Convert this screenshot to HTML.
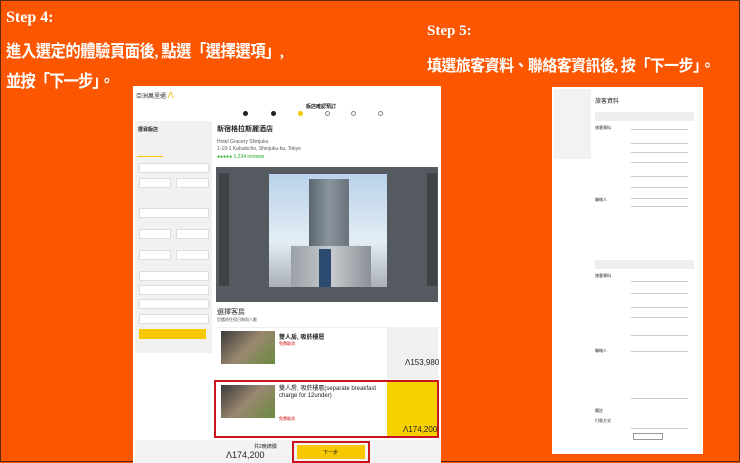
<!DOCTYPE html>
<html><head><meta charset="utf-8"><style>
*{margin:0;padding:0;box-sizing:border-box}
body{width:740px;height:462px;background:#fd5600;position:relative;overflow:hidden;border:1px solid #5a2a10;font-family:"Liberation Sans","Noto Sans CJK TC",sans-serif}
.t{position:absolute;color:#fff;font-family:"Liberation Serif","Noto Sans CJK TC",sans-serif;font-weight:bold;white-space:nowrap;transform-origin:0 0}
.a{position:absolute}
.g{background:#eee}
.ln{position:absolute;height:2px;background:#ccc}
.tx{position:absolute;font-size:5px;color:#555;white-space:nowrap}
</style></head><body>
<div class="t" style="left:5px;top:8px;font-size:16px;font-family:'Liberation Serif',serif">Step 4:</div>
<div class="t" style="left:5px;top:36px;font-size:17px;transform:scaleX(0.9);letter-spacing:-0.5px">進入選定的體驗頁面後, 點選「選擇選項」,</div>
<div class="t" style="left:5px;top:66px;font-size:17px;transform:scaleX(0.9);letter-spacing:-1px">並按「下一步」。</div>
<div class="t" style="left:426px;top:22px;font-size:15px;font-family:'Liberation Serif',serif">Step 5:</div>
<div class="t" style="left:426px;top:51px;font-size:16px;transform:scaleX(0.93);letter-spacing:-0.5px">填選旅客資料、聯絡客資訊後, 按「下一步」。</div>

<!-- step4 screenshot -->
<div class="a" style="left:132px;top:85px;width:308px;height:377px;background:#fff"></div>
<div class="tx" style="left:135px;top:89px;font-size:6px;color:#333">亞洲萬里通 <span style="color:#e8b800;font-size:9px">Λ</span></div>
<div class="tx" style="left:305px;top:102px;font-size:5px;color:#222;font-weight:bold">飯店確認預訂</div>
<div class="a" style="left:242px;top:110px;width:5px;height:5px;border-radius:50%;background:#222"></div>
<div class="a" style="left:270px;top:110px;width:5px;height:5px;border-radius:50%;background:#222"></div>
<div class="a" style="left:297px;top:110px;width:5px;height:5px;border-radius:50%;background:#f7c800"></div>
<div class="a" style="left:324px;top:110px;width:5px;height:5px;border-radius:50%;border:1px solid #888"></div>
<div class="a" style="left:350px;top:110px;width:5px;height:5px;border-radius:50%;border:1px solid #888"></div>
<div class="a" style="left:377px;top:110px;width:5px;height:5px;border-radius:50%;border:1px solid #888"></div>
<div class="a g" style="left:134px;top:120px;width:77px;height:232px;background:#f1f1f1"></div>
<div class="tx" style="left:137px;top:125px;color:#222;font-weight:bold">搜尋飯店</div>
<div class="a" style="left:136px;top:155px;width:26px;height:1px;background:#f7c800"></div>
<div class="a" style="left:138px;top:162px;width:70px;height:10px;background:#fff;border:1px solid #ddd"></div>
<div class="a" style="left:138px;top:177px;width:32px;height:10px;background:#fff;border:1px solid #ddd"></div>
<div class="a" style="left:175px;top:177px;width:33px;height:10px;background:#fff;border:1px solid #ddd"></div>
<div class="a" style="left:138px;top:207px;width:70px;height:10px;background:#fff;border:1px solid #ddd"></div>
<div class="a" style="left:138px;top:228px;width:32px;height:10px;background:#fff;border:1px solid #ddd"></div>
<div class="a" style="left:175px;top:228px;width:33px;height:10px;background:#fff;border:1px solid #ddd"></div>
<div class="a" style="left:138px;top:249px;width:32px;height:10px;background:#fff;border:1px solid #ddd"></div>
<div class="a" style="left:175px;top:249px;width:33px;height:10px;background:#fff;border:1px solid #ddd"></div>
<div class="a" style="left:138px;top:270px;width:70px;height:10px;background:#fff;border:1px solid #ddd"></div>
<div class="a" style="left:138px;top:284px;width:70px;height:10px;background:#fff;border:1px solid #ddd"></div>
<div class="a" style="left:138px;top:298px;width:70px;height:10px;background:#fff;border:1px solid #ddd"></div>
<div class="a" style="left:138px;top:313px;width:70px;height:10px;background:#fff;border:1px solid #ddd"></div>
<div class="a" style="left:138px;top:328px;width:67px;height:10px;background:#f7c800"></div>
<div class="tx" style="left:216px;top:123px;font-size:7px;color:#222;font-weight:bold">新宿格拉斯麗酒店</div>
<div class="tx" style="left:216px;top:138px">Hotel Gracery Shinjuku</div>
<div class="tx" style="left:216px;top:145px">1-19-1 Kabukicho, Shinjuku-ku, Tokyo</div>
<div class="tx" style="left:216px;top:153px;color:#2a2">●●●●● 1,234 reviews</div>
<div class="a" style="left:215px;top:166px;width:222px;height:135px;background:#555a60"></div>
<div class="a" style="left:218px;top:172px;width:10px;height:113px;background:#3f4348"></div>
<div class="a" style="left:426px;top:172px;width:10px;height:113px;background:#3f4348"></div>
<div class="a" style="left:268px;top:173px;width:118px;height:113px;background:linear-gradient(180deg,#b9d2ea,#e4edf5 60%,#aab0b6)"></div>
<div class="a" style="left:308px;top:178px;width:40px;height:80px;background:linear-gradient(90deg,#5c6670,#8a949c,#6a737c)"></div>
<div class="a" style="left:290px;top:245px;width:80px;height:41px;background:linear-gradient(90deg,#9aa0a6,#c8ccd0,#8a9096)"></div>
<div class="a" style="left:318px;top:248px;width:12px;height:38px;background:#2c4a70"></div>
<div class="tx" style="left:216px;top:306px;font-size:7px;color:#222">選擇客房</div>
<div class="tx" style="left:216px;top:316px;font-size:4px">您選的住宿日期與人數</div>
<div class="a" style="left:216px;top:326px;width:221px;height:52px;border-top:1px solid #eee"></div>
<div class="a" style="left:220px;top:330px;width:54px;height:33px;background:linear-gradient(135deg,#3a3a3a,#9a8870 50%,#6a8a40)"></div>
<div class="tx" style="left:278px;top:331px;font-size:6px;color:#222;font-weight:bold">雙人房, 吸菸樓層</div>
<div class="tx" style="left:278px;top:340px;font-size:4px;color:#c00">免費取消</div>
<div class="a" style="left:386px;top:326px;width:51px;height:52px;background:#f0f0f0"></div>
<div class="tx" style="left:404px;top:357px;font-size:8px;color:#222">Λ153,980</div>
<div class="a" style="left:213px;top:379px;width:225px;height:58px;border:2px solid #c8141a"></div>
<div class="a" style="left:220px;top:384px;width:54px;height:33px;background:linear-gradient(135deg,#3a3a3a,#9a8870 50%,#6a8a40)"></div>
<div class="tx" style="left:278px;top:385px;font-size:6px;color:#222;line-height:7px">雙人房, 吸菸樓層(separate breakfast<br>charge for 12under)</div>
<div class="tx" style="left:278px;top:415px;font-size:4px;color:#c00">免費取消</div>
<div class="a" style="left:386px;top:381px;width:50px;height:54px;background:#f7d000"></div>
<div class="tx" style="left:402px;top:424px;font-size:8px;color:#222">Λ174,200</div>
<div class="a" style="left:134px;top:439px;width:306px;height:23px;background:#f3f3f3"></div>
<div class="tx" style="left:253px;top:442px;font-size:5px;color:#222">共2晚總價</div>
<div class="tx" style="left:225px;top:449px;font-size:9px;color:#222">Λ174,200</div>
<div class="a" style="left:291px;top:440px;width:78px;height:22px;border:2px solid #c8141a"></div>
<div class="a" style="left:296px;top:444px;width:68px;height:14px;background:#f7c800"></div>
<div class="tx" style="left:322px;top:448px;color:#222">下一步</div>

<!-- step5 screenshot -->
<div class="a" style="left:551px;top:86px;width:151px;height:367px;background:#fff"></div>
<div class="a" style="left:553px;top:88px;width:37px;height:70px;background:#f2f2f2"></div>
<div class="tx" style="left:594px;top:95px;font-size:6px;color:#222">旅客資料</div>
<div class="a" style="left:594px;top:111px;width:99px;height:9px;background:#eee"></div>
<div class="a" style="left:594px;top:259px;width:99px;height:9px;background:#eee"></div>
<div class="tx" style="left:594px;top:124px;font-size:4px;color:#222">旅客資料</div>
<div class="tx" style="left:594px;top:196px;font-size:4px;color:#222">聯絡人</div>
<div class="tx" style="left:594px;top:272px;font-size:4px;color:#222">旅客資料</div>
<div class="tx" style="left:594px;top:347px;font-size:4px;color:#222">聯絡人</div>
<div class="tx" style="left:594px;top:407px;font-size:4px;color:#222">備註</div>
<div class="tx" style="left:594px;top:417px;font-size:4px;color:#222">付款方式</div>
<div class="ln" style="left:630px;top:128px;width:57px;height:1px"></div>
<div class="ln" style="left:630px;top:142px;width:57px;height:1px"></div>
<div class="ln" style="left:630px;top:151px;width:57px;height:1px"></div>
<div class="ln" style="left:630px;top:161px;width:57px;height:1px"></div>
<div class="ln" style="left:630px;top:175px;width:57px;height:1px"></div>
<div class="ln" style="left:630px;top:186px;width:57px;height:1px"></div>
<div class="ln" style="left:630px;top:197px;width:57px;height:1px"></div>
<div class="ln" style="left:630px;top:205px;width:57px;height:1px"></div>
<div class="ln" style="left:630px;top:280px;width:57px;height:1px"></div>
<div class="ln" style="left:630px;top:292px;width:57px;height:1px"></div>
<div class="ln" style="left:630px;top:306px;width:57px;height:1px"></div>
<div class="ln" style="left:630px;top:316px;width:57px;height:1px"></div>
<div class="ln" style="left:630px;top:334px;width:57px;height:1px"></div>
<div class="ln" style="left:630px;top:350px;width:57px;height:1px"></div>
<div class="ln" style="left:630px;top:397px;width:57px;height:1px"></div>
<div class="ln" style="left:630px;top:427px;width:57px;height:1px"></div>
<div class="a" style="left:632px;top:432px;width:30px;height:7px;border:1px solid #999"></div>
</body></html>
